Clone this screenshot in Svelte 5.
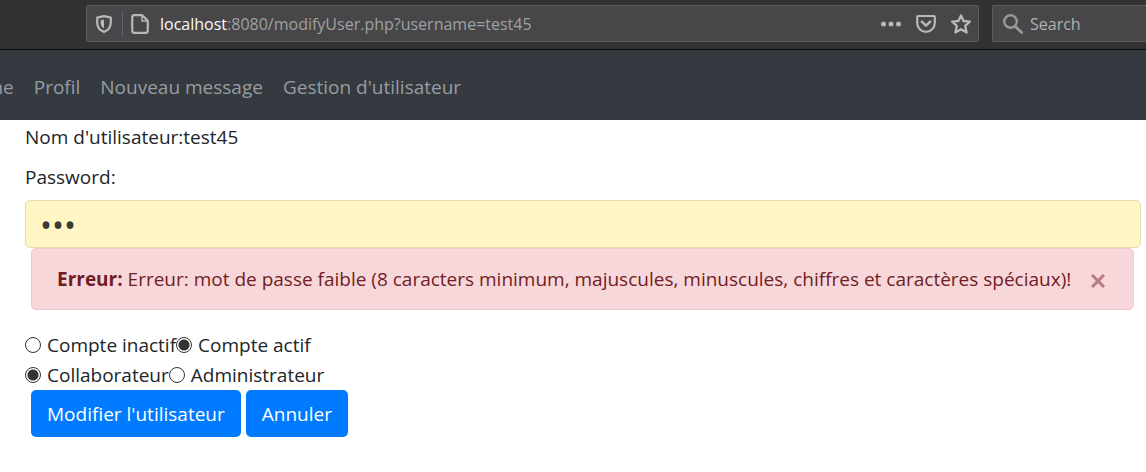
<script>
  let password = $state('abc');
  let status = $state('active');
  let role = $state('collaborator');
  let alertOpen = $state(true);
  const links = ['Home', 'Profil', 'Nouveau message', "Gestion d'utilisateur"];
</script>

<div class="toolbar">
  <div class="address">
    <button class="icon" aria-label="Protection">
      <svg width="16" height="18" viewBox="0 0 16 18" fill="none">
        <path d="M8 1.2 14.8 2.6V7.4C14.8 12 12.4 15.2 8 16.9 3.6 15.2 1.2 12 1.2 7.4V2.6Z" stroke="#b8b8b9" stroke-width="2.2" stroke-linejoin="round" />
        <path d="M8 4.6V13.4C5.6 12 4.6 10 4.6 7.2V5.2Z" fill="#b8b8b9" />
      </svg>
    </button>
    <span class="divider"></span>
    <button class="icon page" aria-label="Page">
      <svg width="18" height="20" viewBox="0 0 18 20" fill="none" stroke="#b8b8b9" stroke-width="2.2" stroke-linejoin="round">
        <path d="M3.5 1.2H11.2L16.8 6.8V16.5A2.3 2.3 0 0 1 14.5 18.8H3.5A2.3 2.3 0 0 1 1.2 16.5V3.5A2.3 2.3 0 0 1 3.5 1.2Z" />
        <path d="M11 1.5V7H16.5" stroke-width="1.5" />
      </svg>
    </button>
    <span class="url"><b>localhost</b>:8080/modifyUser.php?username=test45</span>
    <div class="actions">
      <button class="icon" aria-label="Plus">
        <svg width="20" height="20" viewBox="0 0 20 20" fill="#b8b8b9">
          <circle cx="2.5" cy="10" r="2.5" /><circle cx="10" cy="10" r="2.5" /><circle cx="17.5" cy="10" r="2.5" />
        </svg>
      </button>
      <button class="icon" aria-label="Pocket">
        <svg width="20" height="20" viewBox="0 0 20 20" fill="none" stroke="#b8b8b9" stroke-width="2.2" stroke-linejoin="round" stroke-linecap="round">
          <path d="M2 2H18Q18.8 2 18.8 3V9A8.8 8.8 0 0 1 1.2 9V3Q1.2 2 2 2Z" />
          <path d="M5.8 7.6 10 11.6 14.2 7.6" stroke-width="2.5" />
        </svg>
      </button>
      <button class="icon" aria-label="Marque-page">
        <svg width="20" height="20" viewBox="0 0 20 20" fill="none" stroke="#b8b8b9" stroke-width="2.3" stroke-linejoin="round">
          <path d="M10 1.4 12.6 7 18.8 7.6 14.2 11.9 15.6 18.5 10 15.2 4.4 18.5 5.8 11.9 1.2 7.6 7.4 7Z" />
        </svg>
      </button>
    </div>
  </div>
  <label class="search">
    <svg width="20" height="20" viewBox="0 0 20 20" fill="none" stroke="#98989a">
      <circle cx="7.5" cy="7.5" r="6.3" stroke-width="2.4" />
      <path d="M12.2 12.2 18.6 18.6" stroke-width="2.8" stroke-linecap="round" />
    </svg>
    <input type="text" placeholder="Search" aria-label="Search" />
  </label>
</div>

<nav>
  {#each links as link}
    <a href="#top">{link}</a>
  {/each}
</nav>

<form onsubmit={(e) => e.preventDefault()}>
  <p>Nom d'utilisateur:test45</p>
  <label class="caption" for="password">Password:</label>
  <input id="password" class="password" type="password" bind:value={password} />

  {#if alertOpen}
    <div class="alert" role="alert">
      <span><strong>Erreur:</strong> Erreur: mot de passe faible (8 caracters minimum, majuscules, minuscules, chiffres et caractères spéciaux)!</span>
      <button type="button" class="close" aria-label="Fermer" onclick={() => (alertOpen = false)}>
        <svg width="14" height="14" viewBox="0 0 14 14" fill="none" stroke="#b97b82" stroke-width="3">
          <path d="M1 1 13 13M13 1 1 13" />
        </svg>
      </button>
    </div>
  {/if}

  <div class="choices">
    <label><input type="radio" name="status" value="inactive" bind:group={status} />Compte inactif</label>
    <label><input type="radio" name="status" value="active" bind:group={status} />Compte actif</label>
  </div>
  <div class="choices">
    <label><input type="radio" name="role" value="collaborator" bind:group={role} />Collaborateur</label>
    <label><input type="radio" name="role" value="administrator" bind:group={role} />Administrateur</label>
  </div>
  <div class="buttons">
    <button class="primary" type="submit">Modifier l'utilisateur</button>
    <button class="primary" type="button">Annuler</button>
  </div>
</form>

<style>
  :global(body) {
    background: #fff;
    color: #212529;
    font: 19px/30px "Open Sans", "Noto Sans", sans-serif;
    overflow-x: hidden;
  }
  button,
  input {
    font: inherit;
    box-sizing: border-box;
    margin: 0;
  }
  svg {
    display: block;
    flex: none;
  }
  .toolbar {
    display: flex;
    gap: 13px;
    padding: 5px 0 7px 86px;
    background: #323234;
    border-bottom: 1px solid #0c0c0d;
    font-size: 16px;
  }
  .address,
  .search {
    display: flex;
    align-items: center;
    box-sizing: border-box;
    height: 37px;
    background: #474749;
    border: 1px solid #5c5c5e;
    border-radius: 2px;
  }
  .address {
    flex: 1;
    min-width: 0;
    padding: 0 7px 0 9px;
  }
  .icon {
    padding: 0;
    border: 0;
    background: none;
  }
  .divider {
    width: 1px;
    height: 26px;
    margin: 0 8px 0 10px;
    background: #5f6670;
  }
  .url {
    flex: 1;
    margin-left: 11px;
    overflow: hidden;
    white-space: nowrap;
    color: #a0a0a1;
  }
  .url b {
    font-weight: 400;
    color: #f9f9fa;
  }
  .actions {
    display: flex;
    gap: 15px;
  }
  .search {
    flex: 0 0 154px;
    gap: 7px;
    padding-left: 10px;
    border-right: 0;
    border-radius: 2px 0 0 2px;
  }
  .search input {
    width: 100%;
    min-width: 0;
    padding: 0;
    border: 0;
    background: none;
    color: #f9f9fa;
    outline: 0;
  }
  .search input::placeholder {
    color: #b1b1b2;
    opacity: 1;
  }
  nav {
    display: flex;
    justify-content: flex-start;
    gap: 20px;
    padding: 22px 0 18px;
    background: #343a40;
    overflow: hidden;
  }
  nav a {
    color: #999c9f;
    text-decoration: none;
    white-space: nowrap;
  }
  nav a:first-child {
    margin-left: -40px;
  }
  form {
    padding: 2px 5px 36px 25px;
  }
  p {
    margin: 0 0 10px;
  }
  .caption {
    display: block;
    margin-bottom: 8px;
  }
  .password {
    display: block;
    width: 100%;
    height: 48px;
    padding: 4px 14px;
    border: 1px solid #e8dab5;
    border-radius: 5px;
    background: #fff6c3;
    color: #383a35;
    font-size: 32px;
    outline: 0;
  }
  .alert {
    display: flex;
    align-items: center;
    justify-content: space-between;
    margin: 0 7px 20px 6px;
    padding: 15px 28px 15px 25px;
    border: 1px solid #f5c6cb;
    border-radius: 5px;
    background: #f8d7da;
    color: #721c24;
  }
  .close {
    padding: 4px 0 0;
    border: 0;
    background: none;
  }
  .choices {
    display: flex;
  }
  .choices label {
    display: flex;
    align-items: center;
    gap: 6px;
  }
  input[type="radio"] {
    appearance: none;
    flex: none;
    width: 16px;
    height: 16px;
    border: 1px solid #333;
    border-radius: 50%;
    background: #fff;
  }
  input[type="radio"]:checked {
    background: radial-gradient(circle, #333 0 5px, #fff 6px);
  }
  .buttons {
    display: flex;
    gap: 5px;
    padding-left: 6px;
  }
  .primary {
    padding: 9px 16px 8px;
    border: 0;
    border-radius: 5px;
    background: #007bff;
    color: #fff;
  }
</style>
